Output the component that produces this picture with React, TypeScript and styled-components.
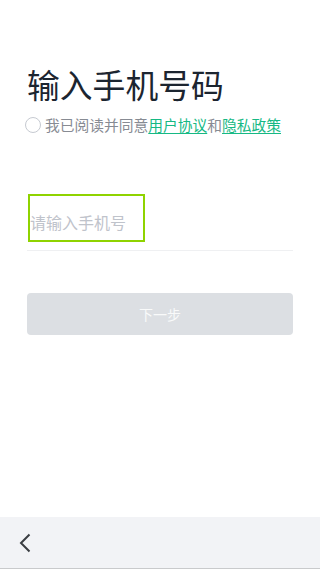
import React, { useState } from 'react';
import styled, { createGlobalStyle } from 'styled-components';

const GlobalStyle = createGlobalStyle`
  html, body {
    margin: 0;
    padding: 0;
    background: #ffffff;
  }
  body {
    font-family: 'Noto Sans', 'Noto Sans CJK SC', sans-serif;
  }
  * {
    box-sizing: border-box;
  }
`;

const App: React.FC = () => {
  const [agreed, setAgreed] = useState(false);
  const [phone, setPhone] = useState('');

  return (
    <Page>
      <GlobalStyle />
      <Main>
        <Title>输入手机号码</Title>
        <AgreementRow onClick={() => setAgreed(!agreed)}>
          <CheckCircle checked={agreed} />
          <AgreementText>
            我已阅读并同意<Link>用户协议</Link>和<Link>隐私政策</Link>
          </AgreementText>
        </AgreementRow>

        <InputRow>
          <PhoneInput
            value={phone}
            onChange={(e) => setPhone(e.target.value)}
            placeholder="请输入手机号"
          />
        </InputRow>

        <NextButton disabled={!phone}>下一步</NextButton>
      </Main>

      <BottomBar>
        <BackButton>
          <svg width="12" height="20" viewBox="0 0 12 20" fill="none">
            <path d="M10.5 1.5 L2 10 L10.5 18.5" stroke="#3a3d42" strokeWidth="2" />
          </svg>
        </BackButton>
      </BottomBar>
    </Page>
  );
};

const Page = styled.div`
  display: flex;
  flex-direction: column;
  width: 320px;
  height: 569px;
  background: #ffffff;
`;

const Main = styled.div`
  flex: 1;
  display: flex;
  flex-direction: column;
  padding: 64px 27px 0 27px;
`;

const Title = styled.h1`
  margin: 0;
  font-family: 'Noto Sans CJK SC', sans-serif;
  font-size: 32.8px;
  font-weight: 400;
  line-height: 40px;
  color: #1c2530;
`;

const AgreementRow = styled.div`
  display: flex;
  align-items: center;
  gap: 4px;
  height: 20px;
  margin-top: 11px;
  margin-left: -2px;
  cursor: pointer;
`;

const CheckCircle = styled.span<{ checked: boolean }>`
  width: 16px;
  height: 16px;
  border-radius: 50%;
  border: 1.5px solid #c6cad1;
  background: ${({ checked }) => (checked ? '#1fbf88' : 'transparent')};
  flex-shrink: 0;
`;

const AgreementText = styled.span`
  font-family: 'Noto Sans CJK SC', sans-serif;
  font-size: 14.75px;
  line-height: 20px;
  color: #878b93;
  white-space: nowrap;
`;

const Link = styled.a`
  color: #16b984;
  text-decoration: underline;
  text-underline-offset: 2px;
`;

const InputRow = styled.div`
  margin-top: 59px;
  padding-bottom: 8px;
  border-bottom: 1px solid #eff0f2;
`;

const PhoneInput = styled.input`
  display: block;
  width: 117px;
  height: 48px;
  margin-left: 1px;
  padding: 8px 0 0 0;
  border: 2px solid #8fd300;
  outline: none;
  font-family: 'Noto Sans CJK SC', sans-serif;
  font-size: 16px;
  color: #1c2530;
  background: #ffffff;

  &::placeholder {
    color: #bfc3cb;
  }
`;

const NextButton = styled.button`
  margin-top: 42px;
  height: 42px;
  width: 100%;
  border: none;
  border-radius: 4px;
  background: ${({ disabled }) => (disabled ? '#dcdfe3' : '#1fbf88')};
  color: rgba(255, 255, 255, 0.85);
  font-family: 'Noto Sans CJK SC', sans-serif;
  font-size: 14px;
  cursor: pointer;
`;

const BottomBar = styled.div`
  display: flex;
  align-items: center;
  height: 52px;
  padding-left: 19px;
  background: #f2f3f6;
  border-bottom: 1px solid #c9cacc;
`;

const BackButton = styled.div`
  display: flex;
  align-items: center;
  padding-top: 1px;
`;

export default App;
